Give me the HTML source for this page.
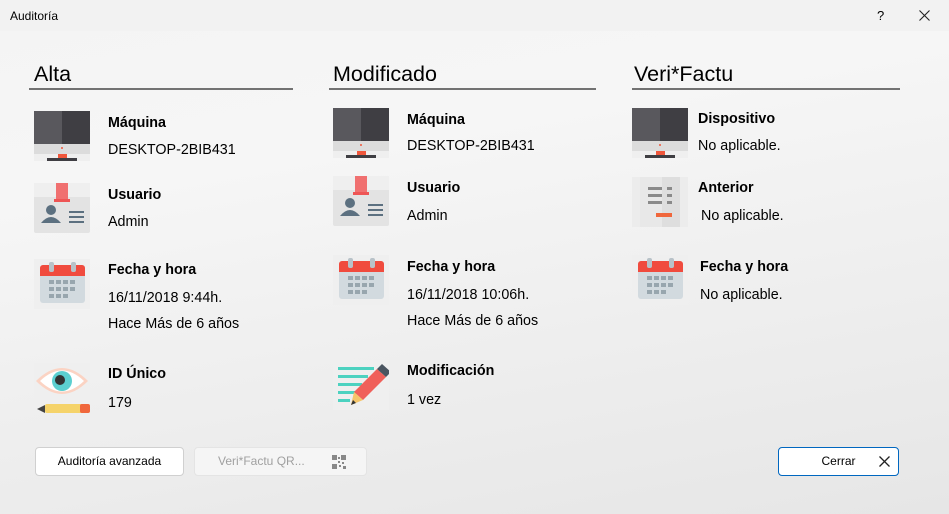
<!DOCTYPE html>
<html><head><meta charset="utf-8"><style>
*{margin:0;padding:0;box-sizing:border-box}
body{width:949px;height:514px;overflow:hidden;font-family:"Segoe UI","Liberation Sans",sans-serif;color:#000;position:relative;background:linear-gradient(170deg,#f4f4f4 0%,#f6f6f6 30%,#e6e6e6 100%)}
.title{position:absolute;left:0;top:0;width:949px;height:31px;background:#f2f2f2;font-size:12px}
.title span{position:absolute;top:9px}
.h{position:absolute;font-size:21.5px;top:62px}
.ln{position:absolute;top:88px;height:2px;background:#727272}
.t{position:absolute;font-size:14.3px;white-space:nowrap;line-height:18px}
.b{font-weight:bold}
svg.i{position:absolute;width:56px;height:50px}
.btn{position:absolute;top:447px;height:29px;border:1px solid #d0d0d0;border-radius:4px;background:#fff;font-size:12px;text-align:center;line-height:27px}
</style></head><body>
<svg width="0" height="0" style="position:absolute">
<defs>
<symbol id="mon" viewBox="0 0 56 50"><rect width="56" height="50" fill="#efefef"/><rect x="0" y="0" width="28" height="33" fill="#59585d"/><rect x="28" y="0" width="28" height="33" fill="#3f3e43"/><rect x="0" y="33" width="56" height="10" fill="#dcdcdc"/><circle cx="28" cy="37" r="1" fill="#f0573c"/><rect x="24" y="43" width="9" height="4" fill="#f0573c"/><rect x="13" y="47" width="30" height="3" fill="#3f3e43"/></symbol>
<symbol id="usr" viewBox="0 0 56 50"><rect width="56" height="50" rx="2" fill="#e3e3e3"/><rect width="56" height="14" fill="#efefef"/><rect x="22" y="0" width="12" height="18" fill="#f07070"/><rect x="20" y="16" width="16" height="3" fill="#e55"/><circle cx="17" cy="27" r="5" fill="#5c7080"/><path d="M7 40 Q17 28 27 40Z" fill="#5c7080"/><rect x="35" y="28" width="15" height="2" fill="#5c7080"/><rect x="35" y="33" width="15" height="2" fill="#5c7080"/><rect x="35" y="38" width="15" height="2" fill="#5c7080"/></symbol>
<symbol id="cal" viewBox="0 0 56 50"><rect width="56" height="50" fill="#efefef"/><rect x="6" y="6" width="45" height="38" rx="3" fill="#d2dadf"/><path d="M6 17V9a3 3 0 0 1 3-3h39a3 3 0 0 1 3 3v8z" fill="#f04b3e"/><rect x="15" y="3" width="5" height="10" rx="2" fill="#b8c2c8"/><rect x="37" y="3" width="5" height="10" rx="2" fill="#b8c2c8"/><g fill="#98a6ae"><rect x="15" y="21" width="5" height="4"/><rect x="22" y="21" width="5" height="4"/><rect x="29" y="21" width="5" height="4"/><rect x="36" y="21" width="5" height="4"/><rect x="15" y="28" width="5" height="4"/><rect x="22" y="28" width="5" height="4"/><rect x="29" y="28" width="5" height="4"/><rect x="36" y="28" width="5" height="4"/><rect x="15" y="35" width="5" height="4"/><rect x="22" y="35" width="5" height="4"/><rect x="29" y="35" width="5" height="4"/></g></symbol>
<symbol id="eye" viewBox="0 0 56 50"><rect width="56" height="50" fill="#efefef"/><path d="M2 18 Q28 -8 54 18 Q28 44 2 18Z" fill="#fbd3c3"/><path d="M6 18 Q28 -3 50 18 Q28 39 6 18Z" fill="#fff"/><circle cx="28" cy="18" r="10" fill="#5ccfd0"/><circle cx="26" cy="17" r="5" fill="#333"/><path d="M3 46 L11 42 L11 50Z" fill="#444"/><rect x="11" y="41" width="44" height="9" rx="2" fill="#f5d36a"/><rect x="46" y="41" width="10" height="9" rx="2" fill="#f0673c"/></symbol>
<symbol id="ant" viewBox="0 0 56 50"><rect width="56" height="50" fill="#ececec"/><rect x="8" y="0" width="22" height="50" fill="#e8e8e8"/><rect x="30" y="0" width="18" height="50" fill="#dedede"/><g fill="#8a8a8a"><rect x="16" y="10" width="14" height="3"/><rect x="16" y="17" width="14" height="3"/><rect x="16" y="24" width="14" height="3"/><rect x="35" y="10" width="5" height="3"/><rect x="35" y="17" width="5" height="3"/><rect x="35" y="24" width="5" height="3"/></g><rect x="24" y="36" width="16" height="4" fill="#f0673c"/></symbol>
<symbol id="mod" viewBox="0 0 56 50"><rect width="56" height="50" fill="#efefef"/><g fill="#4cd2c0"><rect x="5" y="7" width="36" height="3"/><rect x="5" y="15" width="30" height="3"/><rect x="5" y="23" width="24" height="3"/><rect x="5" y="31" width="20" height="3"/><rect x="5" y="39" width="12" height="3"/></g><path d="M44 9 L53 17 L30 40 L21 32Z" fill="#f0605a"/><path d="M44 9 L49 4 L58 12 L53 17Z" fill="#4a5560"/><path d="M21 32 L30 40 L18 45Z" fill="#f5c56a"/><path d="M18 45 L20 40 L23 43Z" fill="#333"/></symbol>
</defs></svg>

<div class="title"><span style="left:10px">Auditoría</span><span style="left:877px;font-size:13px;top:8px">?</span><svg style="position:absolute;left:919px;top:10px" width="11" height="11" viewBox="0 0 11 11"><path d="M0.5 0.5L10.5 10.5M10.5 0.5L0.5 10.5" stroke="#222" stroke-width="1.1"/></svg></div>

<div class="h" style="left:34px">Alta</div><div class="ln" style="left:29px;width:264px"></div>
<div class="h" style="left:333px">Modificado</div><div class="ln" style="left:329px;width:267px"></div>
<div class="h" style="left:634px">Veri*Factu</div><div class="ln" style="left:632px;width:268px"></div>

<svg class="i" style="left:34px;top:111px"><use href="#mon"/></svg>
<div class="t b" style="left:108px;top:114px">Máquina</div><div class="t" style="left:108px;top:141px">DESKTOP-2BIB431</div>
<svg class="i" style="left:34px;top:183px"><use href="#usr"/></svg>
<div class="t b" style="left:108px;top:186px">Usuario</div><div class="t" style="left:108px;top:213px">Admin</div>
<svg class="i" style="left:34px;top:259px"><use href="#cal"/></svg>
<div class="t b" style="left:108px;top:261px">Fecha y hora</div><div class="t" style="left:108px;top:289px">16/11/2018 9:44h.</div><div class="t" style="left:108px;top:315px">Hace Más de 6 años</div>
<svg class="i" style="left:34px;top:363px"><use href="#eye"/></svg>
<div class="t b" style="left:108px;top:365px">ID Único</div><div class="t" style="left:108px;top:394px">179</div>

<svg class="i" style="left:333px;top:108px"><use href="#mon"/></svg>
<div class="t b" style="left:407px;top:111px">Máquina</div><div class="t" style="left:407px;top:137px">DESKTOP-2BIB431</div>
<svg class="i" style="left:333px;top:176px"><use href="#usr"/></svg>
<div class="t b" style="left:407px;top:179px">Usuario</div><div class="t" style="left:407px;top:207px">Admin</div>
<svg class="i" style="left:333px;top:255px"><use href="#cal"/></svg>
<div class="t b" style="left:407px;top:258px">Fecha y hora</div><div class="t" style="left:407px;top:286px">16/11/2018 10:06h.</div><div class="t" style="left:407px;top:312px">Hace Más de 6 años</div>
<svg class="i" style="left:333px;top:360px"><use href="#mod"/></svg>
<div class="t b" style="left:407px;top:362px">Modificación</div><div class="t" style="left:407px;top:391px">1 vez</div>

<svg class="i" style="left:632px;top:108px"><use href="#mon"/></svg>
<div class="t b" style="left:698px;top:110px">Dispositivo</div><div class="t" style="left:698px;top:137px">No aplicable.</div>
<svg class="i" style="left:632px;top:177px"><use href="#ant"/></svg>
<div class="t b" style="left:698px;top:179px">Anterior</div><div class="t" style="left:701px;top:207px">No aplicable.</div>
<svg class="i" style="left:632px;top:255px"><use href="#cal"/></svg>
<div class="t b" style="left:700px;top:258px">Fecha y hora</div><div class="t" style="left:700px;top:286px">No aplicable.</div>

<div class="btn" style="left:35px;width:149px">Auditoría avanzada</div>
<div class="btn" style="left:194px;width:173px;background:#f5f5f5;color:#a0a0a0;border-color:#e4e4e4;text-align:left;padding-left:23px">Veri*Factu QR...<svg style="position:absolute;left:137px;top:7px" width="14" height="14" viewBox="0 0 14 14" fill="#888"><rect x="0" y="0" width="5" height="5"/><rect x="9" y="0" width="5" height="5"/><rect x="0" y="9" width="5" height="5"/><rect x="6" y="2" width="2" height="2"/><rect x="6" y="6" width="2" height="2"/><rect x="10" y="7" width="2" height="2"/><rect x="7" y="10" width="2" height="2"/><rect x="11" y="11" width="3" height="3"/></svg></div>
<div class="btn" style="left:778px;width:121px;border-color:#0067c0">Cerrar<svg style="position:absolute;right:8px;top:8px" width="11" height="11" viewBox="0 0 11 11"><path d="M0.5 0.5L10.5 10.5M10.5 0.5L0.5 10.5" stroke="#222" stroke-width="1.3"/></svg></div>
</body></html>
